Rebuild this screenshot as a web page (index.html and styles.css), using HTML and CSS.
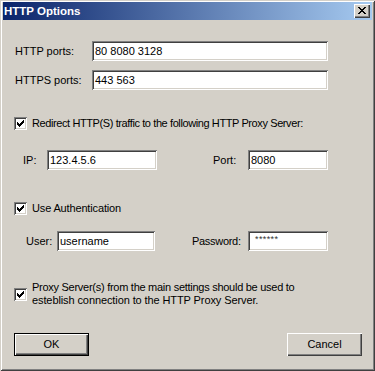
FILE: index.html
```html
<!DOCTYPE html>
<html>
<head>
<meta charset="utf-8">
<link rel="stylesheet" href="styles.css">
</head>
<body>
<div class="window">
  <div class="titlebar">
    <span class="title">HTTP Options</span>
    <span class="close">
      <svg class="close-x" width="8" height="7" viewBox="0 0 8 7" shape-rendering="crispEdges"><path d="M0 0h2v1h-2zM6 0h2v1h-2zM1 1h2v1h-2zM5 1h2v1h-2zM2 2h4v1h-4zM3 3h2v1h-2zM2 4h4v1h-4zM1 5h2v1h-2zM5 5h2v1h-2zM0 6h2v1h-2zM6 6h2v1h-2z" fill="#000"/></svg>
    </span>
  </div>
  <div class="content">
    <div class="fields">
      <div class="row">
        <span class="lbl-main">HTTP ports:</span>
        <div class="edit edit-wide">80 8080 3128</div>
      </div>
      <div class="row row-second">
        <span class="lbl-main">HTTPS ports:</span>
        <div class="edit edit-wide">443 563</div>
      </div>

      <div class="check-row check-redirect">
        <span class="cb"><svg width="7" height="7" viewBox="0 0 7 7" shape-rendering="crispEdges"><path d="M6 0h1v1h-1zM5 1h2v1h-2zM0 2h1v1h-1zM4 2h3v1h-3zM0 3h2v1h-2zM3 3h3v1h-3zM0 4h5v1h-5zM1 5h3v1h-3zM2 6h1v1h-1z" fill="#000"/></svg></span>
        <span class="cb-text text-redirect">Redirect HTTP(S) traffic to the following HTTP Proxy Server:</span>
      </div>
      <div class="row pair-row row-ip">
        <div class="group group-ip">
          <span class="lbl-ip">IP:</span>
          <div class="edit edit-ip">123.4.5.6</div>
        </div>
        <div class="group">
          <span class="lbl-port">Port:</span>
          <div class="edit edit-small">8080</div>
        </div>
      </div>

      <div class="check-row check-auth">
        <span class="cb"><svg width="7" height="7" viewBox="0 0 7 7" shape-rendering="crispEdges"><path d="M6 0h1v1h-1zM5 1h2v1h-2zM0 2h1v1h-1zM4 2h3v1h-3zM0 3h2v1h-2zM3 3h3v1h-3zM0 4h5v1h-5zM1 5h3v1h-3zM2 6h1v1h-1z" fill="#000"/></svg></span>
        <span class="cb-text text-auth">Use Authentication</span>
      </div>
      <div class="row pair-row row-user">
        <div class="group group-user">
          <span class="lbl-user">User:</span>
          <div class="edit edit-user">username</div>
        </div>
        <div class="group">
          <span class="lbl-pass">Password:</span>
          <div class="edit edit-small edit-pass"><span class="stars">******</span></div>
        </div>
      </div>

      <div class="check-row check-proxy">
        <span class="cb"><svg width="7" height="7" viewBox="0 0 7 7" shape-rendering="crispEdges"><path d="M6 0h1v1h-1zM5 1h2v1h-2zM0 2h1v1h-1zM4 2h3v1h-3zM0 3h2v1h-2zM3 3h3v1h-3zM0 4h5v1h-5zM1 5h3v1h-3zM2 6h1v1h-1z" fill="#000"/></svg></span>
        <span class="cb-text multi"><span class="line-1">Proxy Server(s) from the main settings should be used to</span><br><span class="line-2">esteblish connection to the HTTP Proxy Server.</span></span>
      </div>
    </div>

    <div class="buttons">
      <div class="btn btn-default">OK</div>
      <div class="btn">Cancel</div>
    </div>
  </div>
</div>
</body>
</html>
```

FILE: styles.css
```css
* {
  box-sizing: border-box;
  margin: 0;
  padding: 0;
}

body {
  margin: 0;
  background: #d4d0c8;
  font-family: "Liberation Sans", Arial, sans-serif;
  font-size: 11px;
  color: #000;
}

.window {
  width: 375px;
  height: 371px;
  background: #d4d0c8;
  padding: 2px 3px 3px 3px;
  box-shadow: inset 1px 1px #d4d0c8, inset -1px -1px #404040, inset 2px 2px #ffffff, inset -2px -2px #808080;
  display: flex;
  flex-direction: column;
}

.titlebar {
  height: 18px;
  background: linear-gradient(to right, #0a246a, #a6caf0);
  display: flex;
  align-items: center;
  padding-left: 1px;
  color: #fff;
}

.title {
  font-weight: bold;
  font-size: 11.5px;
  line-height: 18px;
}

.close {
  margin-left: auto;
  margin-right: 2px;
  width: 16px;
  height: 14px;
  background: #d4d0c8;
  box-shadow: inset 1px 1px #ffffff, inset -1px -1px #404040, inset -2px -2px #808080;
  display: flex;
  align-items: center;
  justify-content: center;
  padding: 0 1px 1px 0;
}

.close-x {
  display: block;
}

.content {
  flex: 1;
  display: flex;
  flex-direction: column;
  padding: 21px 10px 0 11px;
}

.fields {
  width: 314px;
  display: flex;
  flex-direction: column;
}

.row {
  display: flex;
  align-items: center;
  height: 20px;
}

.row-second {
  margin-top: 9px;
}

.lbl-main {
  width: 78px;
  padding-left: 1px;
}

.edit {
  height: 20px;
  background: #fff;
  box-shadow: inset 1px 1px #808080, inset -1px -1px #ffffff, inset 2px 2px #404040, inset -2px -2px #d4d0c8;
  padding: 0 3px;
  display: flex;
  align-items: center;
  white-space: nowrap;
}

.edit-wide {
  width: 236px;
}

.check-row {
  display: flex;
  align-items: center;
  gap: 5px;
}

.cb {
  width: 13px;
  height: 13px;
  flex: none;
  background: #fff;
  box-shadow: inset 1px 1px #808080, inset -1px -1px #ffffff, inset 2px 2px #404040, inset -2px -2px #d4d0c8;
  display: flex;
  align-items: center;
  justify-content: center;
}

.cb svg {
  display: block;
}

.cb-text {
  line-height: 13px;
  white-space: nowrap;
}

.text-redirect {
  letter-spacing: -0.4px;
}

.text-auth {
  letter-spacing: -0.15px;
}

.line-1 {
  letter-spacing: -0.27px;
}

.line-2 {
  letter-spacing: -0.1px;
}

.check-redirect {
  margin-top: 27px;
}

.pair-row {
  justify-content: space-between;
}

.group {
  display: flex;
  align-items: center;
}

.row-ip {
  margin-top: 20px;
}

.group-ip {
  padding-left: 9px;
}

.lbl-ip {
  width: 24px;
}

.edit-ip {
  width: 110px;
}

.lbl-port {
  width: 35px;
}

.edit-small {
  width: 80px;
}

.check-auth {
  margin-top: 32px;
}

.row-user {
  margin-top: 16px;
}

.group-user {
  padding-left: 12px;
}

.lbl-user {
  width: 31px;
}

.edit-user {
  width: 98px;
}

.lbl-pass {
  width: 56px;
  letter-spacing: -0.3px;
}

.edit-pass {
  align-items: flex-start;
  padding-left: 7px;
}

.stars {
  font-size: 9px;
  line-height: 9px;
  letter-spacing: 0.4px;
  margin-top: 4px;
  color: #333;
}

.check-proxy {
  margin-top: 30px;
}

.buttons {
  margin-top: 26px;
  display: flex;
  justify-content: space-between;
}

.btn {
  width: 75px;
  height: 23px;
  background: #d4d0c8;
  box-shadow: inset 1px 1px #ffffff, inset -1px -1px #404040, inset -2px -2px #808080;
  display: flex;
  align-items: center;
  justify-content: center;
  padding-bottom: 1px;
}

.btn-default {
  border: 1px solid #000;
}
```
